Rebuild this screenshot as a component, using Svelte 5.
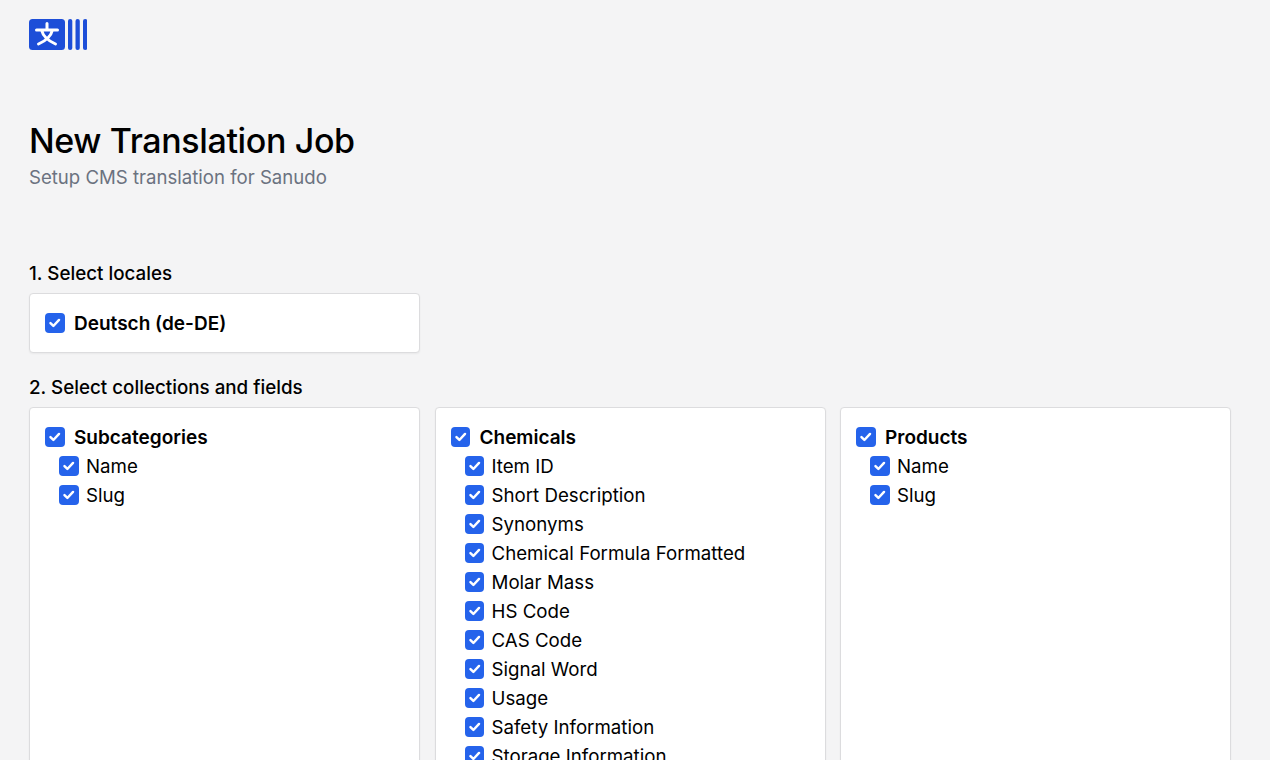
<script lang="ts">
  const locales = ["Deutsch (de-DE)"];
  const collections = [
    { name: "Subcategories", fields: ["Name", "Slug"] },
    {
      name: "Chemicals",
      fields: [
        "Item ID",
        "Short Description",
        "Synonyms",
        "Chemical Formula Formatted",
        "Molar Mass",
        "HS Code",
        "CAS Code",
        "Signal Word",
        "Usage",
        "Safety Information",
        "Storage Information",
      ],
    },
    { name: "Products", fields: ["Name", "Slug"] },
  ];
</script>

{#snippet check()}
  <span class="check">
    <svg viewBox="0 0 20 20" width="19.5" height="19.5" aria-hidden="true">
      <path d="M5.600 10.300l3 3 5.800-6.200" fill="none" stroke="#fff" stroke-width="2.500" stroke-linecap="round" stroke-linejoin="round" />
    </svg>
  </span>
{/snippet}

<div class="page">
  <header class="top">
    <svg class="logo" viewBox="0 0 58 31" width="58" height="31" aria-hidden="true">
      <rect x="0" y="0" width="36" height="31" rx="3.500" fill="#1d4ed8" />
      <path d="M18 4.500v6M7.500 11h21M12.500 11c1.500 6 6 10.500 14 14M23.500 11c-1.500 6-6 10.500-14 14" fill="none" stroke="#fff" stroke-width="3" stroke-linecap="round" />
      <rect x="39" y="0" width="4.300" height="31" rx="2.100" fill="#1d4ed8" />
      <rect x="46.500" y="0" width="4.300" height="31" rx="2.100" fill="#1d4ed8" />
      <rect x="54" y="0" width="4.300" height="31" rx="2.100" fill="#1d4ed8" />
    </svg>
  </header>

  <h1>New Translation Job</h1>
  <p class="sub">Setup CMS translation for Sanudo</p>

  <h2 class="first">1. Select locales</h2>
  <div class="grid">
    {#each locales as locale}
      <div class="card locale">
        <div class="row head">{@render check()}<span>{locale}</span></div>
      </div>
    {/each}
  </div>

  <h2>2. Select collections and fields</h2>
  <div class="grid">
    {#each collections as col}
      <div class="card collection">
        <div class="row head">{@render check()}<span>{col.name}</span></div>
        <ul>
          {#each col.fields as field}
            <li class="row">{@render check()}<span>{field}</span></li>
          {/each}
        </ul>
      </div>
    {/each}
  </div>
</div>

<style>
  :global(body) {
    background: #f4f4f5;
    font-family: Inter, "Liberation Sans", sans-serif;
    color: #000;
  }

  .page {
    height: 760px;
    overflow: hidden;
    box-sizing: border-box;
    padding: 19px 39px 0 29px;
  }

  .top {
    height: 31px;
  }

  .logo {
    display: block;
  }

  h1 {
    margin: 71px 0 0;
    font-size: 34px;
    line-height: 40px;
    font-weight: 500;
    letter-spacing: -0.38px;
  }

  .sub {
    margin: 5px 0 0;
    font-size: 18.6px;
    line-height: 22px;
    color: #6b7280;
  }

  h2 {
    margin: 23px 0 7px;
    font-size: 18.8px;
    line-height: 24px;
    font-weight: 500;
  }

  h2.first {
    margin-top: 74px;
  }

  .grid {
    display: grid;
    grid-template-columns: repeat(3, 1fr);
    gap: 14.5px;
  }

  .card {
    background: #fff;
    border: 1px solid #dcdcde;
    border-radius: 4px;
    box-shadow: 0 1px 2px rgba(0, 0, 0, 0.05);
    padding: 15px;
  }

  .locale {
    height: 60px;
    box-sizing: border-box;
  }

  .collection {
    min-height: 600px;
  }

  .row {
    display: flex;
    align-items: center;
    height: 29px;
    font-size: 18.7px;
  }

  .head {
    font-size: 19px;
    font-weight: 600;
    gap: 9.5px;
  }

  ul {
    list-style: none;
    margin: 0;
    padding: 0 0 0 14px;
  }

  li {
    gap: 7.5px;
  }

  .check {
    flex: none;
    width: 19.5px;
    height: 19.5px;
    margin-bottom: 1.5px;
    border-radius: 4px;
    background: #2563eb;
    display: block;
  }

  .check svg {
    display: block;
  }
</style>
